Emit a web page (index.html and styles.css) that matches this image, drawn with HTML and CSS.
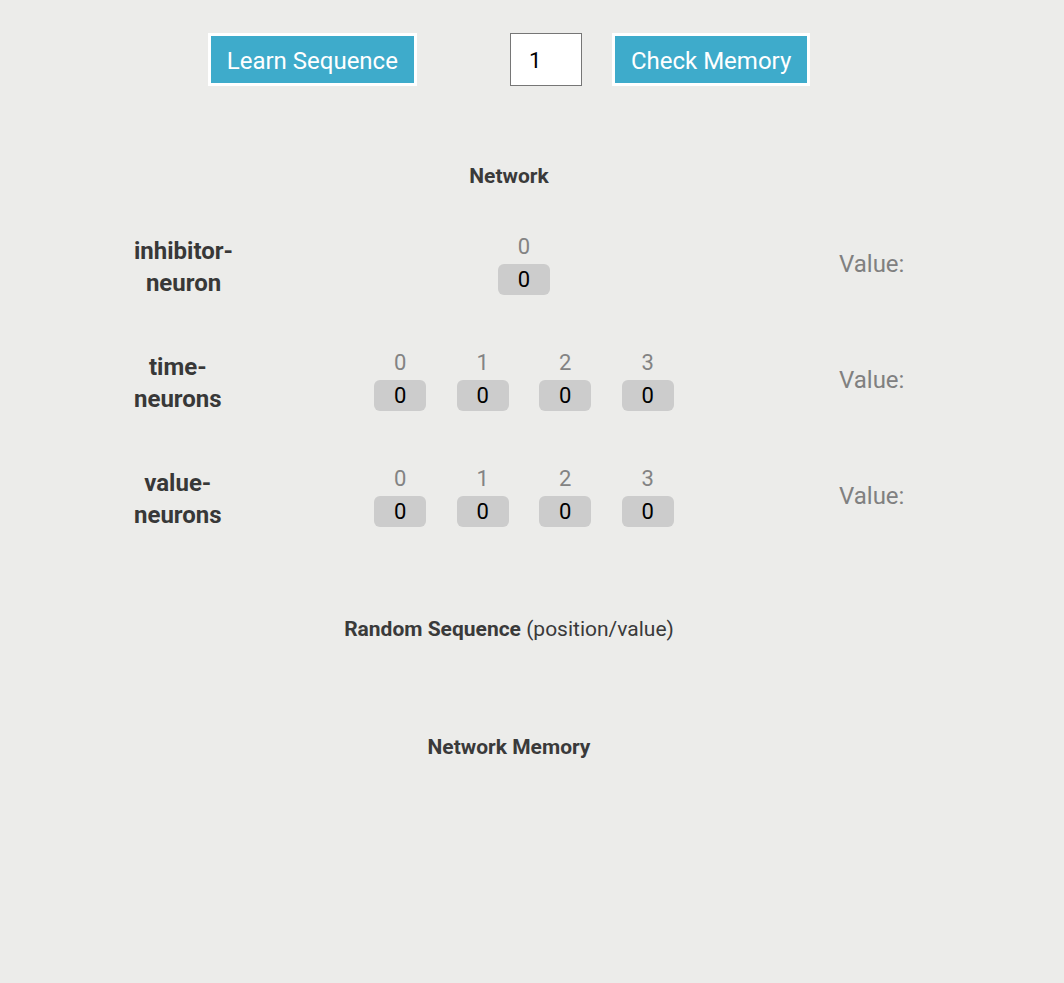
FILE: index.html
```html
<!DOCTYPE html>
<html>
<head>
<meta charset="utf-8">
<title>Sequence Memory</title>
<link rel="stylesheet" href="styles.css">
</head>
<body>
<div class="page">
  <div class="controls">
    <button class="btn btn-learn">Learn Sequence</button>
    <input class="count" type="text" value="1">
    <button class="btn btn-check">Check Memory</button>
  </div>

  <h2 class="heading heading-network">Network</h2>

  <div class="layer layer-first">
    <div class="layer-label">inhibitor-neuron</div>
    <div class="neurons">
      <div class="neuron"><span class="idx">0</span><span class="cell">0</span></div>
    </div>
    <div class="layer-value">Value:</div>
  </div>

  <div class="layer">
    <div class="layer-label">time-neurons</div>
    <div class="neurons">
      <div class="neuron"><span class="idx">0</span><span class="cell">0</span></div>
      <div class="neuron"><span class="idx">1</span><span class="cell">0</span></div>
      <div class="neuron"><span class="idx">2</span><span class="cell">0</span></div>
      <div class="neuron"><span class="idx">3</span><span class="cell">0</span></div>
    </div>
    <div class="layer-value">Value:</div>
  </div>

  <div class="layer">
    <div class="layer-label">value-neurons</div>
    <div class="neurons">
      <div class="neuron"><span class="idx">0</span><span class="cell">0</span></div>
      <div class="neuron"><span class="idx">1</span><span class="cell">0</span></div>
      <div class="neuron"><span class="idx">2</span><span class="cell">0</span></div>
      <div class="neuron"><span class="idx">3</span><span class="cell">0</span></div>
    </div>
    <div class="layer-value">Value:</div>
  </div>

  <h2 class="heading heading-seq"><b>Random Sequence</b> (position/value)</h2>
  <div class="sequence"></div>

  <h2 class="heading heading-memory">Network Memory</h2>
  <div class="memory"></div>
</div>
</body>
</html>
```

FILE: styles.css
```css
html, body {
  margin: 0;
  padding: 0;
  background: #ececea;
  font-family: Roboto, "Liberation Sans", sans-serif;
  color: #333;
}

.page {
  width: 1018px;
  min-height: 983px;
}

.controls {
  display: flex;
  justify-content: center;
  align-items: stretch;
  padding-top: 33px;
  height: 53px;
}

.btn {
  box-sizing: border-box;
  height: 53px;
  padding: 3px 16px 0;
  background: #3eabcb;
  border: 3px solid #ffffff;
  color: #ffffff;
  font-family: Roboto, "Liberation Sans", sans-serif;
  font-size: 24px;
  line-height: 1;
}

.btn-learn {
  margin-right: 93px;
}

.btn-check {
  margin-left: 30px;
}

.count {
  box-sizing: border-box;
  width: 72px;
  height: 53px;
  padding: 2px 0 0 18px;
  border: 1px solid #767676;
  background: #ffffff;
  color: #000;
  font-family: Roboto, "Liberation Sans", sans-serif;
  font-size: 22px;
  outline: none;
}

.heading {
  margin: 0;
  text-align: center;
  font-size: 21px;
  line-height: 24px;
  font-weight: 700;
  color: #3a3a3a;
}

.heading-network {
  margin-top: 78px;
  margin-bottom: 41px;
}

.heading-seq {
  font-weight: 400;
  margin-top: 86px;
}

.heading-seq b {
  font-weight: 700;
}

.sequence {
  height: 94px;
}

.memory {
  height: 100px;
}

.layer {
  display: grid;
  grid-template-columns: 166px 448px 1fr;
  align-items: center;
  padding-left: 134px;
  margin-top: 46px;
}

.layer-first {
  margin-top: 0;
}

.layer-label {
  justify-self: start;
  width: min-content;
  margin-top: 6px;
  text-align: center;
  font-size: 24px;
  line-height: 32px;
  font-weight: 700;
  color: #383838;
}

.neurons {
  display: flex;
  justify-content: center;
  gap: 30.5px;
}

.neuron {
  display: flex;
  flex-direction: column;
  align-items: center;
  gap: 4px;
}

.idx {
  font-size: 22px;
  line-height: 26px;
  color: #838383;
}

.cell {
  width: 52px;
  height: 31px;
  border-radius: 6px;
  background: #cccccc;
  color: #000;
  text-align: center;
  font-size: 22px;
  line-height: 31px;
}

.layer-value {
  padding-left: 91px;
  font-size: 24px;
  color: #808080;
  margin-top: 0;
}
```
